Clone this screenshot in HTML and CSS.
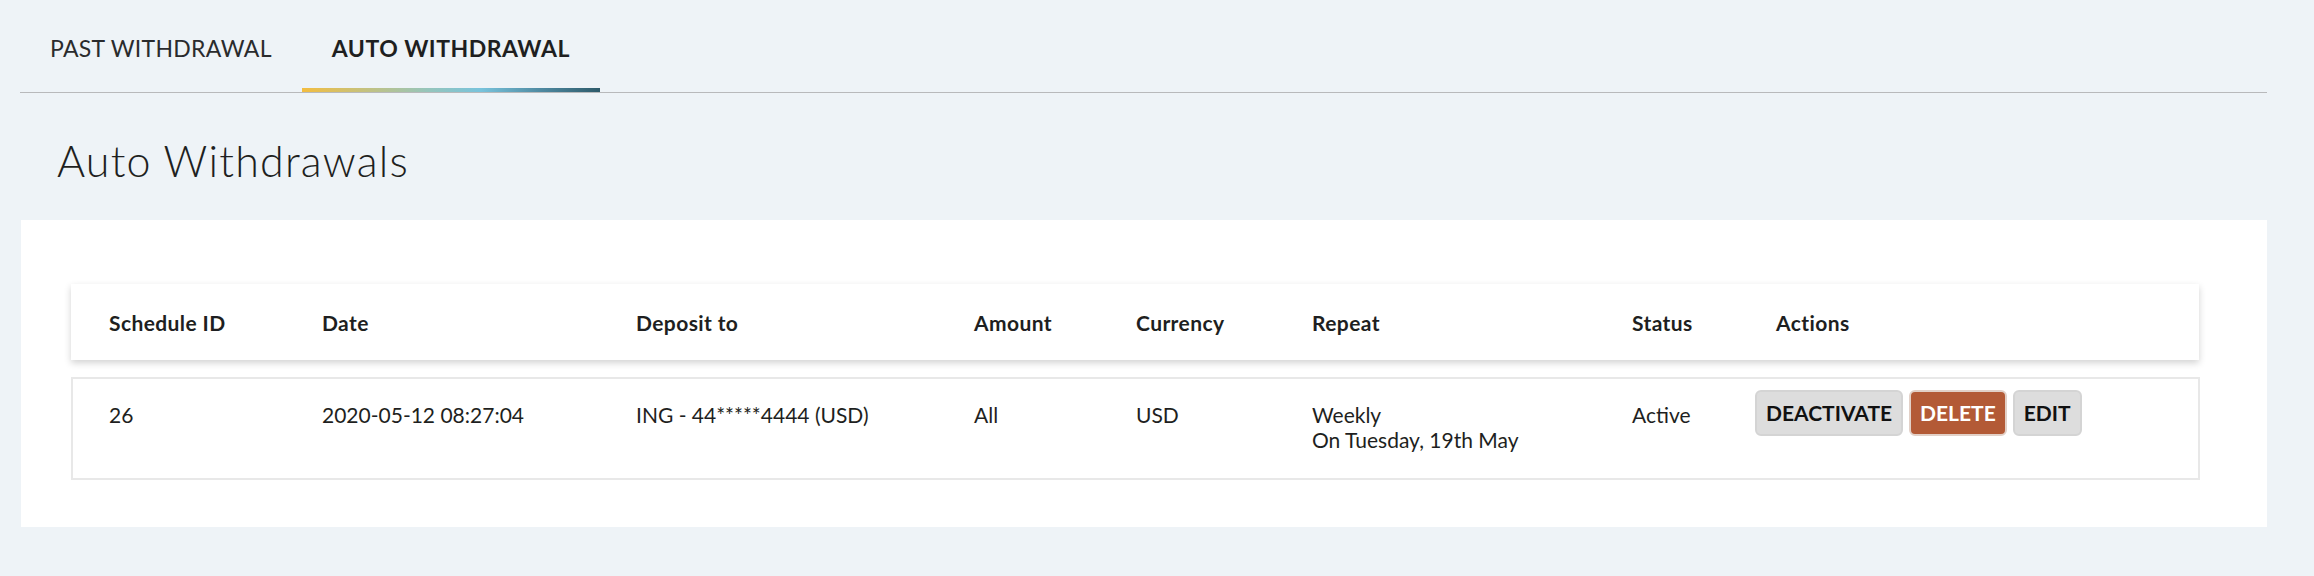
FILE: index.html
```html
<!DOCTYPE html>
<html lang="en">
<head>
<meta charset="utf-8">
<title>Auto Withdrawals</title>
<link rel="stylesheet" href="styles.css">
</head>
<body>
<div class="page">
  <nav class="tabs">
    <div class="tab"><span class="tab-label">PAST WITHDRAWAL</span></div>
    <div class="tab tab-active"><span class="tab-label">AUTO WITHDRAWAL</span></div>
  </nav>
  <h1 class="title">Auto Withdrawals</h1>
  <section class="card">
    <div class="thead grid">
      <div class="th">Schedule ID</div>
      <div class="th">Date</div>
      <div class="th">Deposit to</div>
      <div class="th">Amount</div>
      <div class="th">Currency</div>
      <div class="th">Repeat</div>
      <div class="th">Status</div>
      <div class="th th-actions">Actions</div>
    </div>
    <div class="trow grid">
      <div class="td">26</div>
      <div class="td">2020-05-12 08:27:04</div>
      <div class="td">ING - 44*****4444 (USD)</div>
      <div class="td">All</div>
      <div class="td">USD</div>
      <div class="td">Weekly<br>On Tuesday, 19th May</div>
      <div class="td">Active</div>
      <div class="td-actions">
        <button class="btn">DEACTIVATE</button>
        <button class="btn btn-danger">DELETE</button>
        <button class="btn">EDIT</button>
      </div>
    </div>
  </section>
</div>
</body>
</html>
```

FILE: styles.css
```css
* { box-sizing: border-box; }
html, body {
  margin: 0;
  background: #eef3f7;
  font-family: "Lato", "Liberation Sans", sans-serif;
  color: #1e1f21;
}
.page {
  padding: 0 47px 0 20px;
}
.tabs {
  display: flex;
  border-bottom: 1px solid #b8b9bb;
}
.tab {
  display: flex;
  flex-direction: column;
  height: 92px;
  padding: 35px 30px 0;
  font-size: 23px;
  line-height: 27px;
  color: #2a2b2d;
  letter-spacing: 0.3px;
}
.tab::after {
  content: "";
  margin-top: auto;
  height: 4px;
  margin-left: -30px;
  margin-right: -30px;
}
.tab-active {
  font-weight: 700;
  color: #1e1f21;
  letter-spacing: 0.5px;
}
.tab-active::after {
  background: linear-gradient(90deg, #f3bd40 0%, #bcc28a 25%, #96c5bb 42%, #78c3dc 60%, #4f8aa2 80%, #2d5a6a 100%);
}
.title {
  margin: 43px 0 34px 37px;
  font-size: 43px;
  line-height: 50px;
  font-weight: 300;
  letter-spacing: 1.2px;
  color: #1e1f21;
}
.card {
  background: #ffffff;
  margin-left: 1px;
  padding: 64px 67px 47px 50px;
}
.grid {
  display: grid;
  grid-template-columns: 213px 314px 338px 162px 176px 320px 123px 1fr;
}
.thead {
  height: 76px;
  align-items: center;
  padding-left: 38px;
  background: #ffffff;
  box-shadow: 0 3px 7px rgba(0, 0, 0, 0.18);
  margin-right: 1px;
}
.th {
  font-size: 21px;
  line-height: 24px;
  font-weight: 700;
  letter-spacing: 0.4px;
  padding-top: 2px;
}
.th-actions {
  padding-left: 21px;
}
.trow {
  margin-top: 17px;
  border: 2px solid #e8e8e8;
  padding: 11px 0 26px 36px;
  align-items: start;
}
.td {
  padding-top: 12px;
  font-size: 21px;
  line-height: 25px;
}
.td-actions {
  display: flex;
  gap: 6px;
}
.btn {
  height: 46px;
  padding: 0 9px;
  border: 2px solid #d4d4d4;
  border-radius: 6px;
  background: #dddddd;
  font-family: "Lato", "Liberation Sans", sans-serif;
  font-size: 21px;
  line-height: 24px;
  font-weight: 700;
  color: #111111;
}
.btn-danger {
  background: #b35a36;
  border-color: #e2d0c7;
  color: #ffffff;
}
```
